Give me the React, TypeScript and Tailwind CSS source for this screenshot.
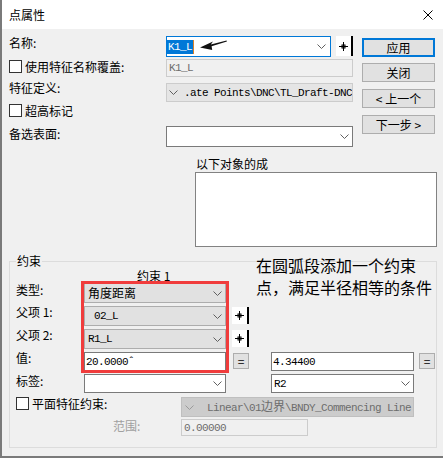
import React from "react";

const MONO =
  "font-['Liberation_Mono','Noto_Sans_CJK_SC',monospace] text-[11px] leading-[14px] tracking-[-0.6px] whitespace-pre";

function Chevron({ color = "#606060" }: { color?: string }) {
  return (
    <svg width="9" height="5" viewBox="0 0 9 5" className="shrink-0">
      <path d="M0.5 0.5L4.5 4.5L8.5 0.5" fill="none" stroke={color} strokeWidth="1" />
    </svg>
  );
}

function Cross() {
  return (
    <svg width="9" height="9" viewBox="0 0 9 9">
      <path d="M0 4.5H9M4.5 0V9" stroke="#000" strokeWidth="1" />
      <rect x="3" y="3" width="3" height="3" fill="none" stroke="#000" strokeWidth="1" />
    </svg>
  );
}

function Pick({ className }: { className: string }) {
  return (
    <div className={`flex w-[17px] shrink-0 ${className}`}>
      <div className="flex w-[15px] items-center justify-center bg-white">
        <Cross />
      </div>
      <div className="w-[2px] bg-black" />
    </div>
  );
}

function Checkbox({ className = "" }: { className?: string }) {
  return <div className={`h-[13px] w-[13px] shrink-0 border border-[#333333] bg-white ${className}`} />;
}

function Btn({
  children,
  primary,
  className = "",
}: {
  children: React.ReactNode;
  primary?: boolean;
  className?: string;
}) {
  return (
    <div
      className={`flex h-[19px] w-[73px] items-center justify-center bg-[#e1e1e1] leading-[16px] ${
        primary ? "border-2 border-[#0078d7]" : "border border-[#adadad]"
      } ${className}`}
    >
      {children}
    </div>
  );
}

function EqBtn({ className = "" }: { className?: string }) {
  return (
    <div
      className={`mt-[1px] flex h-[16px] w-[16px] shrink-0 items-center justify-center border border-[#adadad] bg-[#e1e1e1] leading-[14px] ${className}`}
    >
      =
    </div>
  );
}

function GrayCombo({ children, mono }: { children: React.ReactNode; mono?: boolean }) {
  return (
    <div className="flex w-[142px] items-center border border-[#adadad] bg-[#e1e1e1] pl-[3px] pr-[3px]">
      <span className={mono ? MONO : "leading-[16px]"}>{children}</span>
      <div className="flex-1" />
      <Chevron />
    </div>
  );
}

export default function App() {
  return (
    <div className="relative flex h-[458px] w-[443px] flex-col overflow-hidden border-b-2 border-l-2 border-[#7a7a7a] bg-[#f0f0f0] font-['Noto_Sans_CJK_SC','Noto_Sans',sans-serif] text-[12px] text-black">
      {/* title bar */}
      <div className="flex h-[29px] shrink-0 items-center justify-between bg-white pl-[7px] pr-[10px]">
        <span className="leading-[16px]">点属性</span>
        <svg width="10" height="10" viewBox="0 0 10 10">
          <path d="M0.5 0.5L9.5 9.5M9.5 0.5L0.5 9.5" stroke="#000" strokeWidth="1" />
        </svg>
      </div>

      {/* top section */}
      <div className="flex pl-[7px] pt-[7px]">
        <div className="flex w-[344px] flex-col">
          {/* 名称 */}
          <div className="flex h-[21px]">
            <div className="-mt-[1px] w-[157px] leading-[16px]">名称:</div>
            <div className="flex w-[165px] items-center border border-[#0078d7] bg-white pr-[4px]">
              <div className={`flex h-[14px] items-center bg-[#0078d7] px-[1px] text-white ${MONO}`}>K1_L</div>
              <div className="h-[14px] w-[1px] bg-[#d9822b]" />
              <div className="flex-1" />
              <Chevron />
            </div>
            <Pick className="ml-[5px] h-[20px]" />
          </div>
          {/* 使用特征名称覆盖 */}
          <div className="mt-[2px] flex h-[18px]">
            <div className="flex w-[157px]">
              <Checkbox className="mt-[1px]" />
              <span className="ml-[3px] leading-[16px]">使用特征名称覆盖:</span>
            </div>
            <div className="flex w-[187px] items-center border border-[#cccccc] bg-[#f0f0f0] pl-[2px] text-[#6d6d6d]">
              <span className={MONO}>K1_L</span>
            </div>
          </div>
          {/* 特征定义 */}
          <div className="mt-[6px] flex h-[19px]">
            <div className="-mt-[3px] w-[157px] leading-[16px]">特征定义:</div>
            <div className="flex w-[187px] items-center overflow-hidden border border-[#cccccc] bg-[#e5e5e5]">
              <div className="ml-[2px] flex">
                <Chevron />
              </div>
              <span className={`flex-1 text-right ${MONO}`}>.ate Points\DNC\TL_Draft-DNC</span>
            </div>
          </div>
          {/* 超高标记 */}
          <div className="mt-[2px] flex h-[13px] items-start">
            <Checkbox />
            <span className="-mt-[1px] ml-[3px] leading-[16px]">超高标记</span>
          </div>
          {/* 备选表面 */}
          <div className="mt-[9px] flex h-[21px]">
            <div className="w-[157px] leading-[16px]">备选表面:</div>
            <div className="flex w-[187px] items-center justify-end border border-[#7a7a7a] bg-white pr-[3px]">
              <Chevron />
            </div>
          </div>
        </div>

        {/* buttons */}
        <div className="ml-[9px] flex flex-col pt-[2px]">
          <Btn primary>应用</Btn>
          <Btn className="mt-[6px]">关闭</Btn>
          <Btn className="mt-[7px]">&lt; 上一个</Btn>
          <Btn className="mt-[7px]">下一步 &gt;</Btn>
        </div>
      </div>

      {/* list */}
      <div className="ml-[193px] mt-[9px] flex flex-col">
        <div className="h-[16px] pl-[1px] leading-[16px]">以下对象的成</div>
        <div className="h-[75px] w-[242px] border border-[#828282] bg-white" />
      </div>

      {/* group */}
      <div className="ml-[7px] mt-[14px] flex h-[187px] w-[428px] flex-col border border-[#dcdcdc]">
        <div className="-mt-[8px] ml-[6px] w-fit bg-[#f0f0f0] px-[1px] leading-[14px]">约束</div>
        <div className="h-[15px] pl-[127px] leading-[15px]">约束 1</div>

        {/* 类型 */}
        <div className="flex h-[20px] pl-[6px]">
          <div className="-mt-[1px] w-[68px] leading-[16px]">类型:</div>
          <GrayCombo>角度距离</GrayCombo>
        </div>
        {/* 父项 1 */}
        <div className="mt-[3px] flex h-[20px] pl-[6px]">
          <div className="-mt-[2px] w-[68px] leading-[16px]">父项 1:</div>
          <GrayCombo mono>{" 02_L"}</GrayCombo>
          <Pick className="ml-[6px] mt-[1px] h-[17px]" />
        </div>
        {/* 父项 2 */}
        <div className="mt-[3px] flex h-[20px] pl-[6px]">
          <div className="-mt-[2px] w-[68px] leading-[16px]">父项 2:</div>
          <GrayCombo mono>R1_L</GrayCombo>
          <Pick className="ml-[6px] mt-[1px] h-[17px]" />
        </div>
        {/* 值 */}
        <div className="mt-[3px] flex h-[19px] pl-[6px]">
          <div className="-mt-[2px] w-[68px] leading-[16px]">值:</div>
          <div className="flex w-[142px] items-center border border-[#7a7a7a] bg-white pl-[1px]">
            <span className={MONO}>20.0000ˆ</span>
          </div>
          <EqBtn className="ml-[7px]" />
          <div className="ml-[22px] flex w-[143px] items-center border border-[#7a7a7a] bg-white pl-[1px]">
            <span className={MONO}>4.34400</span>
          </div>
          <EqBtn className="ml-[5px]" />
        </div>
        {/* 标签 */}
        <div className="mt-[3px] flex h-[19px] pl-[6px]">
          <div className="-mt-[1px] w-[68px] leading-[16px]">标签:</div>
          <div className="flex w-[142px] items-center justify-end border border-[#7a7a7a] bg-white pr-[3px]">
            <Chevron />
          </div>
          <div className="ml-[45px] flex w-[143px] items-center border border-[#7a7a7a] bg-white pl-[2px] pr-[3px]">
            <span className={MONO}>R2</span>
            <div className="flex-1" />
            <Chevron />
          </div>
        </div>
        {/* 平面特征约束 */}
        <div className="mt-[4px] flex h-[20px] pl-[6px]">
          <div className="flex w-[165px]">
            <Checkbox />
            <span className="-mt-[1px] ml-[3px] leading-[16px]">平面特征约束:</span>
          </div>
          <div className="flex w-[233px] items-center overflow-hidden border border-[#bfbfbf] bg-[#cccccc] text-[#6d6d6d]">
            <div className="ml-[3px] flex">
              <Chevron color="#9a9a9a" />
            </div>
            <span className={`ml-[13px] ${MONO}`}>
              Linear\01
              <span className="font-['Noto_Sans_CJK_SC',sans-serif] text-[12px] tracking-normal">边界</span>
              \BNDY_Commencing Line
            </span>
          </div>
        </div>
        {/* 范围 */}
        <div className="mt-[2px] flex h-[17px] pl-[6px]">
          <div className="w-[97px]" />
          <div className="-mt-[1px] w-[68px] leading-[16px] text-[#a0a0a0]">范围:</div>
          <div className="flex w-[127px] items-center border border-[#cccccc] bg-[#f0f0f0] pl-[2px] text-[#6d6d6d]">
            <span className={MONO}>0.00000</span>
          </div>
        </div>
      </div>

      {/* annotation overlays */}
      <div className="absolute left-[254px] top-[254px] text-[16px] leading-[22px] text-black">
        <div>在圆弧段添加一个约束</div>
        <div>点，满足半径相等的条件</div>
      </div>
      <div className="absolute left-[79px] top-[281px] h-[92px] w-[148px] border-[3px] border-[#f03c3c]" />
      <svg
        className="absolute left-[196px] top-[38px]"
        width="30"
        height="14"
        viewBox="0 0 30 14"
      >
        <polygon
          points="2,9.5 15,3.6 12.8,6.4 28.6,2.4 28.9,3.4 13.6,8.2 14.2,12"
          fill="#111"
        />
      </svg>
    </div>
  );
}
